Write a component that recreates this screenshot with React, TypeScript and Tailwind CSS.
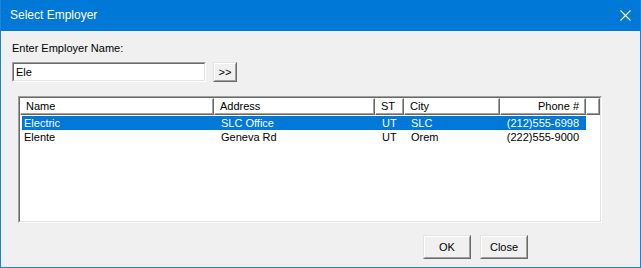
import React from "react";

function Sunken({ className = "", children }: { className?: string; children?: React.ReactNode }) {
  return (
    <div className={"border-t border-l border-t-[#a0a0a0] border-l-[#a0a0a0] border-b border-r border-b-white border-r-white " + className}>
      <div className="w-full h-full border-t border-l border-t-[#696969] border-l-[#696969] border-b border-r border-b-[#e3e3e3] border-r-[#e3e3e3] bg-white">
        {children}
      </div>
    </div>
  );
}

function Raised({ className = "", children }: { className?: string; children?: React.ReactNode }) {
  return (
    <div className={"border-t border-l border-t-[#e3e3e3] border-l-[#e3e3e3] border-b border-r border-b-[#696969] border-r-[#696969] bg-[#f0f0f0] " + className}>
      <div className="w-full h-full flex items-center justify-center border-t border-l border-t-white border-l-white border-b border-r border-b-[#a0a0a0] border-r-[#a0a0a0]">
        {children}
      </div>
    </div>
  );
}

function HeaderCell({ w, children, right = false }: { w: string; children?: React.ReactNode; right?: boolean }) {
  return (
    <div className={"h-[17px] border-t border-l border-t-white border-l-white border-b border-r border-b-[#696969] border-r-[#696969] " + w}>
      <div className={"h-full border-b border-r border-b-[#a0a0a0] border-r-[#a0a0a0] flex items-center leading-none " + (right ? "justify-end pr-[5px]" : "pl-[5px]")}>
        {children}
      </div>
    </div>
  );
}

const rows = [
  { name: "Electric", addr: "SLC Office", st: "UT", city: "SLC", phone: "(212)555-6998", sel: true },
  { name: "Elente", addr: "Geneva Rd", st: "UT", city: "Orem", phone: "(222)555-9000", sel: false },
];

export default function App() {
  return (
    <div className="w-[641px] h-[268px] bg-[#f0f0f0] border-x border-b border-[#1883d7] flex flex-col font-['Liberation_Sans',Arial,sans-serif] text-[11px] text-black overflow-hidden">
      <div className="h-[31px] -mx-px bg-[#0078d7] flex items-center justify-between pl-[10px] pr-[10px] shrink-0">
        <span className="text-white text-[12px] font-['Liberation_Sans',Arial,sans-serif] leading-none mt-[-1px]">Select Employer</span>
        <svg width="11" height="11" viewBox="0 0 11 11">
          <path d="M0.5 0.5 L10.5 10.5 M10.5 0.5 L0.5 10.5" stroke="white" strokeWidth="1.1" />
        </svg>
      </div>
      <div className="flex flex-col pl-[11px] pt-[11px]">
        <div className="leading-[13px] h-[13px]">Enter Employer Name:</div>
        <div className="flex items-start gap-[7px] mt-[7px]">
          <Sunken className="w-[194px] h-[20px]">
            <div className="pl-[2px] leading-[16px]">Ele</div>
          </Sunken>
          <Raised className="w-[24px] h-[20px]">
            <span className="leading-none">&gt;&gt;</span>
          </Raised>
        </div>
        <Sunken className="ml-[6px] mt-[14px] w-[584px] h-[127px]">
          <div className="flex">
            <HeaderCell w="w-[194px]">Name</HeaderCell>
            <HeaderCell w="w-[161px]">Address</HeaderCell>
            <HeaderCell w="w-[29px]">ST</HeaderCell>
            <HeaderCell w="w-[96px]">City</HeaderCell>
            <HeaderCell w="w-[86px]" right>Phone #</HeaderCell>
            <HeaderCell w="flex-1"></HeaderCell>
          </div>
          <div className="pt-[1px]">
            {rows.map((r) => (
              <div
                key={r.name}
                className={"flex ml-[2px] w-[564px] h-[14px] items-center leading-none " + (r.sel ? "bg-[#0078d7] text-white" : "")}
              >
                <div className="w-[192px] pl-[2px]">{r.name}</div>
                <div className="w-[161px] pl-[7px]">{r.addr}</div>
                <div className="w-[29px] pl-[7px]">{r.st}</div>
                <div className="w-[96px] pl-[7px]">{r.city}</div>
                <div className="w-[86px] pr-[7px] text-right">{r.phone}</div>
              </div>
            ))}
          </div>
        </Sunken>
        <div className="flex gap-[9px] mt-[12px] ml-[411px]">
          <Raised className="w-[48px] h-[24px]">
            <span className="leading-none">OK</span>
          </Raised>
          <Raised className="w-[48px] h-[24px]">
            <span className="leading-none">Close</span>
          </Raised>
        </div>
      </div>
    </div>
  );
}
